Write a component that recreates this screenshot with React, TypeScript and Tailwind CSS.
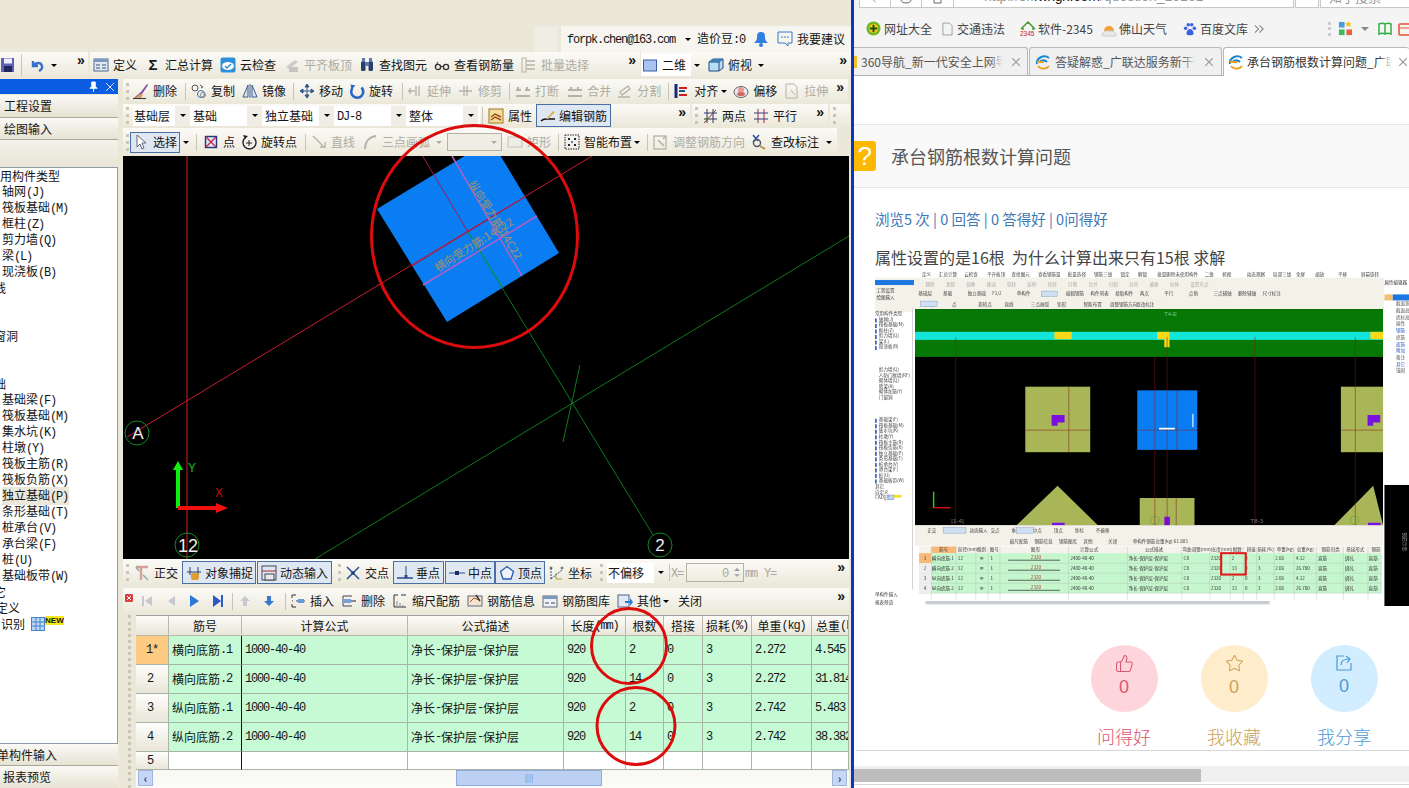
import React from "react";
import { ThumbsUp, Star } from "lucide-react";

const T = ({ children }: { children: string }) => (
  <>
    {children.split(/([\x21-\x7e]+)/).map((p, i) =>
      /^[\x21-\x7e]+$/.test(p) ? (
        <span key={i} className="font-['Liberation_Mono',monospace] text-[12px] tracking-[-1.2px]">{p}</span>
      ) : (
        <span key={i}>{p}</span>
      )
    )}
  </>
);

const S = ({ children, cls = "w-4 h-4" }: { children: React.ReactNode; cls?: string }) => (
  <svg viewBox="0 0 16 16" className={`${cls} shrink-0`} fill="none">{children}</svg>
);

const g = "#b5b3a8";
const ic: Record<string, React.ReactNode> = {
  save: <S><rect x="1" y="1" width="14" height="14" fill="#5a62b8" /><rect x="4" y="1.5" width="8" height="5" fill="#eef" /><rect x="4" y="9" width="8" height="6" fill="#23265e" /></S>,
  undo: <S><path d="M4 4v5h5M4.5 8.5C7 5 12 5 13 9c.5 2-1 4-3 5" stroke="#3a70c8" strokeWidth="2.4" /></S>,
  def: <S><rect x="1" y="2" width="14" height="12" fill="#dfe8f5" stroke="#50688c" /><rect x="1" y="2" width="14" height="3" fill="#7f98bd" /><path d="M3 8h4M3 11h4M9 8h4M9 11h4" stroke="#36507c" /></S>,
  sigma: <span className="w-4 h-4 shrink-0 flex items-center justify-center font-['Liberation_Sans'] font-bold text-[15px] leading-4 text-[#1a1a1a]">Σ</span>,
  cloud: <S><rect x="0.5" y="0.5" width="15" height="15" rx="2" fill="#2f8fd8" /><ellipse cx="8" cy="9" rx="6" ry="4" fill="#fff" /><path d="M5 9l2 2 4-4" stroke="#2f8fd8" strokeWidth="1.5" /></S>,
  flat: <S><path d="M2 10l9-7 3 2-9 7z" fill="#ccc" /><rect x="5" y="10" width="9" height="5" fill="#c4c4c0" /></S>,
  find: <S><rect x="2" y="4" width="4.5" height="10" rx="1.5" fill="#28406e" /><rect x="9.5" y="4" width="4.5" height="10" rx="1.5" fill="#28406e" /><rect x="6" y="5" width="4" height="4" fill="#5a78aa" /><rect x="3" y="1" width="3" height="4" fill="#5a78aa" /><rect x="10" y="1" width="3" height="4" fill="#5a78aa" /></S>,
  glass: <S><circle cx="4" cy="10" r="2.6" stroke="#333" strokeWidth="1.4" /><circle cx="12" cy="10" r="2.6" stroke="#333" strokeWidth="1.4" /><path d="M6.5 9.5h3M2 8l2-3" stroke="#333" /></S>,
  batch: <S><rect x="1" y="1" width="4" height="14" stroke={g} /><path d="M5 4h9M5 8h9M5 12h9" stroke={g} strokeWidth="1.5" /></S>,
  d2: <S><rect x="1.5" y="3" width="13" height="11" fill="#a9c2ee" stroke="#3c5ea6" /></S>,
  d3: <S><path d="M1 5l4-3h10v9l-4 3H1z" fill="#b8dcf4" stroke="#1f4a80" /><path d="M1 5h10v9M11 5l4-3" stroke="#1f4a80" /><path d="M1 5l4-3h10l-4 3z" fill="#3f7fb8" /></S>,
  brush: <S><path d="M1 15c3-3 5-4 7-6l6-8 1 1-6 9c-2 2-5 4-8 4z" fill="#7a4aa0" /><path d="M2 15l5-4 3 1-2 3z" fill="#e0a060" /><path d="M0 15.5h13" stroke="#333" /></S>,
  copy: <S><circle cx="4" cy="5" r="3" stroke="#555" /><circle cx="10" cy="11" r="3.5" stroke="#3a70a8" /><circle cx="12" cy="12" r="2.5" stroke="#888" /><path d="M9 2l3 2-2 1" stroke="#555" /></S>,
  mirror: <S><path d="M1 14L6 2v12zM15 14L10 2v12z" fill="#dbe6f4" stroke="#3a5a8c" /><path d="M8 1v14" stroke="#3a5a8c" /></S>,
  move: <S><path d="M8 1v14M1 8h14M8 1L6 4h4zM8 15l-2-3h4zM1 8l3-2v4zM15 8l-3-2v4z" stroke="#2f5a8c" fill="#2f5a8c" /></S>,
  rotate: <S><path d="M3.5 5A6 6 0 1 0 12.5 4.5" stroke="#2a66c8" strokeWidth="2.6" /><path d="M1.5 1.5l5 1-4 4z" fill="#2a66c8" /></S>,
  ext: <S><path d="M1 8h7M3 5v6M9 3v10M12 3v10" stroke={g} strokeWidth="1.3" /></S>,
  trim: <S><path d="M1 8h13M6 3v10M9 3v10" stroke={g} strokeWidth="1.3" /></S>,
  brk: <S><path d="M1 7h5M10 7h5M1 13h14M3 4v3M12 4v3" stroke={g} strokeWidth="2" /></S>,
  merge: <S><path d="M1 7h14M1 13h14M4 4v3M11 4v3" stroke={g} strokeWidth="2" /></S>,
  split: <S><path d="M1 14h12M3 9l8-6 2 3-8 6z" stroke={g} strokeWidth="1.3" /></S>,
  align: <S><path d="M2 1v14" stroke="#1a2a7a" strokeWidth="3" /><path d="M5 5h8M5 12h8" stroke="#c82020" strokeWidth="2" /><path d="M5 8h6" stroke="#1a5a9a" strokeWidth="2" /></S>,
  offset: <S><ellipse cx="8" cy="9" rx="7" ry="5.5" fill="#e8e8f4" stroke="#666" /><circle cx="8" cy="7" r="3" fill="#e89a90" /><ellipse cx="8" cy="11" rx="4" ry="2" fill="#d06a60" /></S>,
  stretch: <S><path d="M2 1h8l3 3v11H2z" stroke={g} /><path d="M7 7l4 5" stroke={g} /></S>,
  prop: <S><rect x="1" y="1" width="14" height="14" fill="#f2dfa0" stroke="#a07820" /><path d="M3 9l4-3 6 3M3 12l4-3 6 3" stroke="#a04a10" strokeWidth="1.4" /></S>,
  edit: <S><path d="M1 13c3-3 4-2 7-2h7" stroke="#111" strokeWidth="1.5" /><path d="M6 11l7-8 2 1-7 7z" fill="#d8b060" /></S>,
  two: <S><path d="M2 5h13M2 11h13M5 1v14M11 1v14" stroke="#2a3a6a" /><path d="M2 15L14 2" stroke="#8a3a2a" /><circle cx="5" cy="11" r="1.5" fill="#5a7a20" /></S>,
  para: <S><path d="M1 5h14M1 11h14" stroke="#2a3a8a" /><path d="M5 1v14M11 1v14" stroke="#a02a4a" /></S>,
  cursor: <S><path d="M4 1v12l3-3 2 5 2-1-2-5h4z" fill="#fff" stroke="#667" /></S>,
  point: <S><rect x="2.5" y="2.5" width="11" height="11" fill="#dde4f8" stroke="#25357a" strokeWidth="1.4" /><path d="M3 3l10 10M13 3L3 13" stroke="#c02a4a" strokeWidth="1.4" /></S>,
  rotp: <S><path d="M5 3a6.5 6.5 0 1 0 7 0" stroke="#223" strokeWidth="1.4" /><path d="M2 1l5 1-3 3z" fill="#223" /><path d="M8 6v6M5 9h6" stroke="#223" /></S>,
  linei: <S><path d="M2 2l11 11M9 13h5V8" stroke={g} strokeWidth="1.3" /></S>,
  arc: <S><path d="M3 15C3 8 7 3 14 2" stroke={g} strokeWidth="2" /></S>,
  rect: <S><rect x="1" y="3" width="14" height="10" fill="#eeede8" stroke="#c4c2b8" /></S>,
  smart: <S><rect x="1" y="1" width="14" height="14" stroke="#223" strokeDasharray="1.5 1" /><path d="M4 4h2v2H4zM10 4h2v2h-2zM4 10h2v2H4zM10 10h2v2h-2z" fill="#223" /><circle cx="8" cy="8" r="1" fill="#2a66c8" /></S>,
  adj: <S><rect x="1" y="2" width="12" height="13" stroke={g} strokeWidth="1.3" /><path d="M5 6l6 6M13 2l-3 3" stroke={g} strokeWidth="1.5" /></S>,
  mark: <S><path d="M2 1l5 6M8 1L2 8" stroke="#22509a" strokeWidth="1.4" /><circle cx="6" cy="9" r="3.5" stroke="#556" strokeWidth="1.4" /><path d="M9 12l5 3" stroke="#b89040" strokeWidth="2" /></S>,
  ortho: <S><path d="M2 2h12M7 2v13" stroke="#d8a098" strokeWidth="2.4" /><path d="M2 2l3 4M9 10l5 5" stroke="#8aa" strokeWidth="1.4" /></S>,
  snap: <S><path d="M1 7h14M4 2v8M12 2v8" stroke="#2a3a6a" /><rect x="5" y="8" width="8" height="7" rx="2" fill="#d8a030" /></S>,
  dyn: <S><rect x="1" y="1" width="14" height="14" stroke="#445" /><path d="M1 6h14" stroke="#a02a2a" /><rect x="4" y="9" width="9" height="6" fill="#e8e8f0" stroke="#445" /></S>,
  cross: <S><path d="M2 2l12 12M14 2L2 14" stroke="#2a5a98" strokeWidth="1.6" /><circle cx="8" cy="8" r="1.8" fill="#1a3a78" /></S>,
  perp: <S><path d="M0 13h16" stroke="#2a4a8a" strokeWidth="1.5" /><path d="M9 1v12" stroke="#2a4a8a" /><rect x="7.5" y="10" width="3" height="3" fill="#2a4a8a" /></S>,
  mid: <S><path d="M0 8h16" stroke="#2a4a8a" /><rect x="6" y="6" width="4" height="4" fill="#1a2a6a" /></S>,
  vert: <S><path d="M8 1.5l6.5 5-2.5 7.5H4L1.500 6.500z" fill="#eef3fb" stroke="#2a5aa8" strokeWidth="1.3" /></S>,
  coord: <S><path d="M3 14V3M3 14l11-9" stroke="#2a4a8a" strokeDasharray="2 1" /><circle cx="3" cy="3" r="1" stroke="#555" /><circle cx="14" cy="3" r="1" stroke="#555" /><path d="M8 8v6h6" stroke="#a0a030" /></S>,
  ins: <S><path d="M6 2H2v3M6 14H2v-3M2 8h1" stroke="#333" /><path d="M6 8h9" stroke="#444" /><rect x="8" y="6" width="6" height="4" fill="#6a9ad8" /></S>,
  del: <S><path d="M2 3h9M2 13h9M2 3v10" stroke="#446" /><rect x="2" y="6" width="8" height="4" fill="#7aa0d8" /><path d="M10 8h5" stroke="#222" /></S>,
  scale: <S><path d="M2 14h12M2 14V2h4M9 2h5" stroke="#333" /><path d="M5 14V8M8 14v-4M11 14v-2" stroke="#889" /></S>,
  info: <S><rect x="1" y="3" width="14" height="10" fill="#f4e4d0" stroke="#667" /><path d="M3 9l4-4 5 2" stroke="#a05020" /><path d="M9 2l4 6" stroke="#333" strokeWidth="1.4" /></S>,
  lib: <S><rect x="1" y="3" width="14" height="11" fill="#eef2f8" stroke="#667" /><rect x="1" y="3" width="14" height="3" fill="#7a98c0" /><path d="M3 10h4M9 10h4" stroke="#445" /></S>,
  other: <S><rect x="1" y="2" width="11" height="12" fill="#e0e8f4" stroke="#568" /><path d="M8 8h5V5l3 4-3 4v-3H8z" fill="#2a78d8" /></S>,
};

const Tool = ({ n, i, ml = "", dim = false }: { n: string; i: string; ml?: string; dim?: boolean }) => (
  <div className={`flex items-center gap-[4px] shrink-0 whitespace-nowrap ${ml} ${dim ? "text-[#aeaca2]" : ""}`}>
    {ic[i]}
    <span><T>{n}</T></span>
  </div>
);

const Box = ({ n, i, cls }: { n: string; i: string; cls: string }) => (
  <div className={`flex items-center gap-[3px] h-[23px] shrink-0 whitespace-nowrap border border-[#4a6fa5] bg-[#dfe8f2] pl-[3px] ${cls}`}>
    {ic[i]}
    <span>{n}</span>
  </div>
);

const Sep = ({ ml }: { ml: string }) => <div className={`w-px h-[17px] bg-[#c8c5b6] shrink-0 ${ml}`} />;
const Grip = ({ ml }: { ml: string }) => <div className={`h-[17px] w-[3px] border-l-[3px] border-dotted border-[#c9c6b8] shrink-0 ${ml}`} />;
const Caret = ({ ml, dim = false }: { ml: string; dim?: boolean }) => (
  <div className={`w-0 h-0 border-x-[3px] border-t-[3px] border-x-transparent shrink-0 ${dim ? "border-t-[#aaa]" : "border-t-black"} ${ml}`} />
);
const More = ({ cls = "ml-auto mr-[4px]" }: { cls?: string }) => (
  <div className={`self-start mt-[1px] text-[14px] leading-[14px] font-bold font-['Liberation_Sans'] ${cls}`}>»</div>
);
const bar = "flex items-center bg-linear-to-b from-[#fbfaf6] to-[#ebe8da]";

const Combo = ({ t, w }: { t: string; w: string }) => (
  <div className={`flex items-center h-[20px] bg-white shrink-0 ${w}`}>
    <span className="flex-1 whitespace-nowrap pl-[1px]"><T>{t}</T></span>
    <div className="w-[15px] h-[20px] bg-[#f0eee4] flex items-center justify-center mr-[2px]"><Caret ml="" /></div>
  </div>
);

const NavI = ({ ml, c, d }: { ml: string; c: string; d: string }) => (
  <svg viewBox="0 0 14 14" className={`w-[14px] h-[14px] shrink-0 ${ml}`}><path d={d} fill={c} /></svg>
);

const tree: [string, string, boolean?][] = [
  ["常用构件类型", "-ml-[12px]"], ["轴网(J)", "ml-[2px]"], ["筏板基础(M)", "ml-[2px]"], ["框柱(Z)", "ml-[2px]"], ["剪力墙(Q)", "ml-[2px]"], ["梁(L)", "ml-[2px]"], ["现浇板(B)", "ml-[2px]"], ["线", "-ml-[6px]"], ["", ""], ["", ""], ["门窗洞", "-ml-[18px]"], ["", ""], ["", ""], ["基础", "-ml-[18px]"], ["基础梁(F)", "ml-[2px]"], ["筏板基础(M)", "ml-[2px]"], ["集水坑(K)", "ml-[2px]"], ["柱墩(Y)", "ml-[2px]"], ["筏板主筋(R)", "ml-[2px]"], ["筏板负筋(X)", "ml-[2px]"], ["独立基础(P)", "ml-[2px]", true], ["条形基础(T)", "ml-[2px]"], ["桩承台(V)", "ml-[2px]"], ["承台梁(F)", "ml-[2px]"], ["桩(U)", "ml-[2px]"], ["基础板带(W)", "ml-[2px]"], ["其它", "-ml-[18px]"], ["自定义", "-ml-[16px]"],
];

const cols = "grid grid-cols-[33px_73px_166px_156px_62px_38px_39px_49px_60px_37px]";
const heads = ["", "筋号", "计算公式", "公式描述", "长度(mm)", "根数", "搭接", "损耗(%)", "单重(kg)", "总重(kg)"];
const rows = [
  ["1*", "横向底筋.1", "1000-40-40", "净长-保护层-保护层", "920", "2", "0", "3", "2.272", "4.545"],
  ["2", "横向底筋.2", "1000-40-40", "净长-保护层-保护层", "920", "14", "0", "3", "2.272", "31.814"],
  ["3", "纵向底筋.1", "1000-40-40", "净长-保护层-保护层", "920", "2", "0", "3", "2.742", "5.483"],
  ["4", "纵向底筋.2", "1000-40-40", "净长-保护层-保护层", "920", "14", "0", "3", "2.742", "38.382"],
  ["5", "", "", "", "", "", "", "", "", ""],
];

const Canvas = () => (
  <svg viewBox="123 156 726 403" className="w-[726px] h-[403px] block bg-black shrink-0">
    <polygon points="377,209 491,140 559,253 447,322" fill="#0b7df2" />
    <line x1="315" y1="559" x2="849" y2="236" stroke="#0e7a1e" />
    <line x1="468" y1="232" x2="653" y2="535" stroke="#0e7a1e" />
    <line x1="468" y1="232" x2="503" y2="288" stroke="#0c8c78" strokeWidth="1.5" />
    <line x1="580" y1="365" x2="563" y2="442" stroke="#0e7a1e" />
    <line x1="187" y1="155" x2="187" y2="559" stroke="#d02020" />
    <line x1="422" y1="155" x2="468" y2="232" stroke="#a01a50" />
    <line x1="127" y1="437" x2="597" y2="153" stroke="#c81c30" />
    <line x1="412" y1="266" x2="525" y2="197" stroke="#9a1a50" />
    <line x1="452" y1="156" x2="522" y2="276" stroke="#b060c8" strokeWidth="1.5" />
    <line x1="423" y1="285" x2="537" y2="216" stroke="#b060c8" strokeWidth="1.5" />
    <text x="476" y="248" transform="rotate(-32 476 248)" textAnchor="middle" fontSize="11" fontWeight="500" fill="#8d8f80" fontFamily="Noto Sans CJK SC">横向受力筋:14C22</text>
    <text x="492" y="222" transform="rotate(58 492 222)" textAnchor="middle" fontSize="11" fontWeight="500" fill="#8d8f80" fontFamily="Noto Sans CJK SC">纵向受力筋:14C22</text>
    <circle cx="137" cy="433" r="12" stroke="#128a28" fill="none" />
    <circle cx="187" cy="545" r="12" stroke="#128a28" fill="none" />
    <circle cx="660" cy="545" r="12" stroke="#128a28" fill="none" />
    <text x="138" y="439" textAnchor="middle" fontSize="17" fill="#eee" fontFamily="Liberation Sans">A</text>
    <text x="188" y="552" textAnchor="middle" fontSize="18" fill="#eee" fontFamily="Liberation Sans">12</text>
    <text x="660" y="551" textAnchor="middle" fontSize="17" fill="#eee" fontFamily="Liberation Sans">2</text>
    <path d="M176 508V470h-3l5-9 5 9h-3v38z" fill="#10f010" />
    <path d="M178 506h38v-3l12 5-12 5v-3h-38z" fill="#f01010" />
    <text x="188" y="472" fontSize="12" fontWeight="300" fill="#10c020" fontFamily="Liberation Sans">Y</text>
    <text x="215" y="497" fontSize="12" fontWeight="300" fill="#c01010" fontFamily="Liberation Sans">X</text>
  </svg>
);

const tiny = { fontFamily: "Noto Sans CJK SC", fontSize: 13 };
const Thumb = () => {
  const tb1 = ["定义", "汇总计算", "云检查", "平齐板顶", "查找图元", "查看钢筋量", "批量选择", "钢筋三维", "锁定", "解锁", "批量删除未使用构件", "二维", "俯视", "动态观察", "局部三维", "全屏", "缩放", "平移", "屏幕旋转"];
  const xs1 = [180, 228, 300, 365, 435, 510, 595, 670, 745, 795, 850, 985, 1035, 1105, 1180, 1245, 1300, 1365, 1430];
  const tr = [877, 907, 937, 967];
  const left = ["轴网(J)", "筏板基础(M)", "框柱(Z)", "剪力墙(Q)", "梁(L)", "现浇板(B)"];
  const left2 = ["剪力墙(Q)", "人防门框墙(RF)", "砌体墙(Q)", "暗梁(A)", "砌体加筋(Y)", "门窗洞"];
  const left3 = ["基础梁(F)", "筏板基础(M)", "集水坑(K)", "柱墩(Y)", "筏板主筋(R)", "筏板负筋(X)", "独立基础(P)", "条形基础(T)", "桩承台(V)", "承台梁(F)", "桩(U)", "基础板带(W)"];
  return (
    <svg viewBox="46 18 1521 1005" preserveAspectRatio="none" className="w-[534px] h-[336px] block blur-[0.4px]">
      <rect x="46" y="38" width="1450" height="94" fill="#f3f1e8" />
      <rect x="46" y="60" width="107" height="80" fill="#f3f1e8" />
      <rect x="160" y="778" width="1333" height="62" fill="#f3f1e8" />
      <g fill="#444" {...tiny}>
        {tb1.map((t, i) => <text key={i} x={xs1[i]} y="33">{t}</text>)}
        {["删除", "复制", "镜像", "移动", "旋转", "延伸", "修剪", "打断", "合并", "分割", "对齐", "偏移", "拉伸", "设置夹点"].map((t, i) => <text key={i} x={190 + i * 58} y="62" fill="#aaa">{t}</text>)}
        {["基础层", "基础", "独立基础", "F1/2", "单构件", "属性", "编辑钢筋", "构件列表", "拾取构件", "两点", "平行", "点角", "三点辅轴", "删除辅轴", "尺寸标注"].map((t, i) => <text key={i} x={170 + i * 70} y="91">{t}</text>)}
        {["选择", "点", "旋转点", "直线", "三点画弧", "矩形", "智能布置", "调整钢筋方向", "查改标注"].map((t, i) => <text key={i} x={190 + i * 75} y="122">{t}</text>)}
      </g>
      <rect x="520" y="78" width="45" height="17" fill="#cfe0f2" stroke="#6a8ab5" />
      <rect x="175" y="108" width="48" height="17" fill="#cfe0f2" stroke="#6a8ab5" />
      <rect x="46" y="45" width="111" height="15" fill="#1a78e0" />
      <g fill="#444" {...tiny}><text x="50" y="80">工程设置</text><text x="50" y="102">绘图输入</text><text x="46" y="150">常用构件类型</text>
        {left.map((t, i) => <text key={t} x="57" y={167 + i * 16.500}>{t}</text>)}
        {left2.map((t, i) => <text key={t} x="57" y={318 + i * 16.500}>{t}</text>)}
        {left3.map((t, i) => <text key={i} x="57" y={468 + i * 16.500}>{t}</text>)}
        <text x="46" y="668">其它</text><text x="46" y="685">自定义</text><text x="46" y="700">CAD识别</text>
        <text x="46" y="990">单构件输入</text><text x="46" y="1013">报表预览</text>
      </g>
      {[...Array(6)].map((_, i) => <rect key={i} x="46" y={160 + i * 16.500} width="5" height="12" fill="#3a68c0" />)}
      {[...Array(12)].map((_, i) => <rect key={i} x="46" y={460 + i * 16.500} width="5" height="12" fill="#3a68c0" />)}
      <rect x="152" y="130" width="1.500" height="840" fill="#aaa" />
      <rect x="85" y="688" width="15" height="14" fill="#bcd4f4" stroke="#4a7ac8" />
      <rect x="100" y="688" width="22" height="8" fill="#f2e020" />
      <rect x="160" y="132" width="1333" height="646" fill="#000" />
      <rect x="160" y="132" width="1333" height="143" fill="#067806" />
      <rect x="160" y="200" width="1333" height="24" fill="#12e6da" />
      <rect x="557" y="200" width="49" height="22" fill="#f8d818" />
      <rect x="850" y="200" width="35" height="22" fill="#f8d818" />
      <rect x="870" y="222" width="15" height="24" fill="#f8d818" />
      <rect x="1457" y="200" width="36" height="22" fill="#f8d818" />
      <text x="888" y="152" fill="#7ac88a" fontSize="17" textAnchor="middle" fontFamily="Liberation Sans">T4-E</text>
      <rect x="474" y="364" width="185" height="196" fill="#a9b657" />
      <rect x="1373" y="364" width="120" height="196" fill="#a9b657" />
      <rect x="793" y="375" width="171" height="178" fill="#0b7df2" />
      <path d="M549 449h37v22h-20v10h-17z" fill="#7a10e0" />
      <path d="M1449 449h36v22h-20v10h-16z" fill="#7a10e0" />
      <path d="M566 660L450 778h230zM1465 660L1355 778h138z" fill="#a9b657" />
      <rect x="800" y="697" width="156" height="81" fill="#a9b657" />
      <rect x="870" y="753" width="16" height="25" fill="#7a10e0" />
      <rect x="550" y="771" width="36" height="7" fill="#7a10e0" />
      <rect x="1450" y="771" width="36" height="7" fill="#7a10e0" />
      <g stroke="#8a1a1a" strokeWidth="1.500">
        <path d="M276 215v563M843 275v503M878 215v563M1128 215v563M1414 215v563M598 364v196M906 375v178M904 697v81" />
        <path d="M474 494h185M793 494h171M1373 494h120" />
      </g>
      <rect x="950" y="445" width="3" height="40" fill="#fff" />
      <rect x="855" y="487" width="45" height="5" fill="#fff" />
      <path d="M213 678v48" stroke="#10e010" strokeWidth="4" fill="none" />
      <path d="M213 726h48" stroke="#e01010" strokeWidth="4" />
      <text x="263" y="772" fill="#777" fontSize="18" fontFamily="Liberation Sans">[1-4]</text>
      <text x="1115" y="772" fill="#777" fontSize="18" fontFamily="Liberation Sans">T8-3</text>
      <circle cx="843" cy="764" r="12" stroke="#1a8a2a" fill="none" />
      <circle cx="1412" cy="764" r="12" stroke="#1a8a2a" fill="none" />
      <rect x="1497" y="658" width="105" height="362" fill="#000" />
      <text x="1550" y="800" fill="#999" fontSize="14" transform="rotate(90 1550 800)" fontFamily="Noto Sans CJK SC">钢筋示意</text>
      <text x="1497" y="57" fill="#333" {...tiny}>属性编辑器</text>
      <rect x="1520" y="88" width="82" height="18" fill="#1a78e0" />
      <rect x="1497" y="88" width="23" height="18" fill="#f4c070" />
      {[117, 137, 157, 177, 197, 217, 237, 257, 277, 297, 317].map((y, i) => (
        <text key={y} x="1530" y={y + 4} fill={i === 4 || i === 6 || i === 7 || i === 9 ? "#2a5ac0" : "#555"} {...tiny}>{["截面宽", "截面高", "底标高", "属性", "钢筋", "底筋", "面筋", "附加", "备注", "其它", "锚固"][i]}</text>
      ))}
      <g fill="#444" {...tiny}>
        {["正交", "对象捕捉", "动态输入", "交点", "垂点", "中点", "顶点", "坐标", "不偏移"].map((t, i) => <text key={i} x={195 + i * 60} y="798">{t}</text>)}
        {["缩尺配筋", "钢筋信息", "钢筋图库", "其他", "关闭", "单构件钢筋总重(kg):61.803"].map((t, i) => <text key={i} x={430 + i * 70} y="831">{t}</text>)}
      </g>
      <rect x="240" y="785" width="65" height="17" fill="#cfe0f2" stroke="#6a8ab5" />
      <rect x="448" y="785" width="50" height="17" fill="#cfe0f2" stroke="#6a8ab5" />
      <rect x="172" y="842" width="1318" height="20" fill="#f4f2ea" />
      <rect x="207" y="842" width="70" height="20" fill="#f8b878" />
      {["筋号", "直径(mm)", "级别", "图号", "图形", "计算公式", "公式描述", "弯曲调整(mm)", "长度(mm)", "根数", "搭接", "损耗(%)", "单重(kg)", "总重(kg)", "钢筋归类", "搭接形式", "钢筋"].map((t, i) => (
        <text key={i} x={[228, 282, 337, 373, 490, 630, 815, 922, 1005, 1065, 1105, 1135, 1190, 1247, 1318, 1388, 1460][i]} y="857" fill="#444" {...tiny}>{t}</text>
      ))}
      <rect x="172" y="862" width="1318" height="120" fill="#c6f6ce" />
      <rect x="172" y="982" width="1318" height="20" fill="#fff" />
      <path d="M172 892h1318M172 922h1318M172 952h1318M172 982h1318M206 842v160M277 842v160M333 842v160M368 842v160M402 842v160M597 842v160M765 842v160M920 842v160M1000 842v160M1058 842v160M1095 842v160M1133 842v160M1183 842v160M1240 842v160M1303 842v160M1380 842v160M1450 842v160" stroke="#a8b8a8" />
      {tr.map((y, i) => (
        <g key={y} fill="#333" {...tiny}>
          <rect x="172" y={y - 15} width="34" height="30" fill={i === 0 ? "#f8b878" : "#eee"} />
          <text x="185" y={y + 4}>{i + 1}</text>
          <text x="208" y={y + 4}>{i < 2 ? "横向底筋" : "纵向底筋"}.{i % 2 + 1}</text>
          <text x="282" y={y + 4}>12</text><text x="345" y={y + 4}>Φ</text><text x="375" y={y + 4}>1</text>
          <path d={`M425 ${y + 6}h148`} stroke="#222" strokeWidth="2" />
          <text x="490" y={y + 2} fill="#b03020">2320</text>
          <text x="603" y={y + 4}>2400-40-40</text>
          <text x="768" y={y + 4}>净长-保护层-保护层</text>
          <text x="925" y={y + 4}>C8</text><text x="1003" y={y + 4}>2320</text>
          <text x="1062" y={y + 4}>{i % 2 ? 13 : 2}</text><text x="1100" y={y + 4}>0</text><text x="1137" y={y + 4}>3</text>
          <text x="1186" y={y + 4}>2.06</text><text x="1245" y={y + 4}>{i % 2 ? "26.780" : "4.12"}</text>
          <text x="1308" y={y + 4}>直筋</text><text x="1385" y={y + 4}>绑扎</text><text x="1452" y={y + 4}>直筋</text>
        </g>
      ))}
      <rect x="1032" y="862" width="70" height="64" fill="none" stroke="#e01818" strokeWidth="6" />
      <rect x="190" y="1005" width="980" height="10" fill="#c8ccd4" />
    </svg>
  );
};

const TabIcon = () => (
  <svg viewBox="0 0 16 16" className="w-[16px] h-[16px] shrink-0" fill="none">
    <path d="M2 10C1 4 9 0 14 4M4 8c3-2 6-2 8 0" stroke="#1f88cc" strokeWidth="2" />
    <path d="M3 12c3 4 9 3 11 0M2 8h7" stroke="#f0a020" strokeWidth="2" />
  </svg>
);
const TabX = () => (
  <svg viewBox="0 0 8 8" className="w-[8px] h-[8px] shrink-0"><path d="M0 0l8 8M8 0L0 8" stroke="#999" strokeWidth="1.200" /></svg>
);
const Fade = ({ to }: { to: string }) => <div className={`absolute right-0 top-0 bottom-0 w-[14px] bg-linear-to-r from-transparent ${to}`} />;

export default function App() {
  return (
    <div className="w-[1409px] h-[788px] flex overflow-hidden bg-white text-[12px] leading-[16px] text-[#151515] font-['Noto_Sans_CJK_SC','Liberation_Sans',sans-serif]">
      <div className="relative w-[851px] h-[788px] shrink-0 overflow-hidden bg-[#ebe8da]">
        <div className="h-[26px]" />
        <div className="h-[26px] flex">
          <div className="w-[24px] ml-[534px] bg-[#f0eee4]" />
          <div className="w-[290px] ml-[3px] flex items-center bg-[#f6f5ef] pl-[6px] whitespace-nowrap">
            <span><T>forpk.chen@163.com</T></span>
            <Caret ml="ml-[10px]" />
            <span className="ml-[6px]"><T>造价豆:0</T></span>
            <svg viewBox="0 0 16 16" className="w-[16px] h-[16px] ml-[8px] shrink-0"><path d="M8 1c3 0 4 2 4 5 0 3 1 4 3 6H1c2-2 3-3 3-6 0-3 1-5 4-5z" fill="#2f7fe0" /><circle cx="8" cy="14" r="2" fill="#2f7fe0" /></svg>
            <svg viewBox="0 0 16 16" className="w-[16px] h-[16px] ml-[8px] shrink-0" fill="none"><path d="M1 1h14v11h-4v3l-3-3H1z" stroke="#3a78c8" /><path d="M4 6h8" stroke="#3a78c8" strokeDasharray="2 1" /></svg>
            <span className="ml-[4px]">我要建议</span>
          </div>
        </div>
        <div className="h-[26px] flex">
          <div className={`${bar} w-[88px] shrink-0`}>
            <div className="w-[14px] overflow-hidden shrink-0">{ic.save}</div>
            <div className="w-px h-[22px] bg-[#c8c5b6] ml-[7px]" />
            <div className="ml-[7px]">{ic.undo}</div>
            <Caret ml="ml-[6px]" />
            <More cls="ml-[20px]" />
          </div>
          <div className={`${bar} w-[550px] shrink-0 ml-[2px]`}>
            <Tool n="定义" i="def" ml="ml-[3px]" />
            <Tool n="汇总计算" i="sigma" ml="ml-[8px]" />
            <Tool n="云检查" i="cloud" ml="ml-[7px]" />
            <Tool n="平齐板顶" i="flat" ml="ml-[8px]" dim />
            <Tool n="查找图元" i="find" ml="ml-[7px]" />
            <Tool n="查看钢筋量" i="glass" ml="ml-[7px]" />
            <Tool n="批量选择" i="batch" ml="ml-[7px]" dim />
            <More />
          </div>
          <div className={`${bar} flex-1 ml-[1px]`}>
            <div className="flex items-center gap-[4px] bg-white w-[50px] h-[22px] pl-[1px] shrink-0">{ic.d2}<span>二维</span></div>
            <Caret ml="ml-[3px]" />
            <Tool n="俯视" i="d3" ml="ml-[8px]" />
            <Caret ml="ml-[6px]" />
            <More />
          </div>
        </div>
        <div className="flex h-[710px]">
          <div className="w-[118px] shrink-0 flex flex-col overflow-hidden">
            <div className="h-[15px] mt-[1px] bg-[#0a5ce0] flex items-center justify-end pr-[4px] gap-[8px] text-white shrink-0">
              <svg viewBox="0 0 10 12" className="w-[9px] h-[11px]"><path d="M3 1h4v5l2 2H1l2-2zM5 8v4" fill="#fff" stroke="#fff" /></svg>
              <svg viewBox="0 0 8 8" className="w-[8px] h-[8px]"><path d="M0 0l8 8M8 0L0 8" stroke="#dde" /></svg>
            </div>
            <div className="h-[23px] mt-[1px] flex items-center pl-[4px] bg-linear-to-b from-[#faf9f4] to-[#e6e3d4] border-b border-[#a8a69a] shrink-0">工程设置</div>
            <div className="h-[22px] flex items-center pl-[4px] bg-linear-to-b from-[#faf9f4] to-[#e6e3d4] border-b border-[#a8a69a] shrink-0">绘图输入</div>
            <div className="h-[27px] bg-linear-to-b from-[#f4f2ea] to-[#e8e5d6] shrink-0" />
            <div className="h-[577px] bg-white border-y border-r border-[#8f9ba8] overflow-hidden shrink-0">
              {tree.map(([t, m, hl], i) => (
                <div key={i} className="h-[16px] flex items-center whitespace-nowrap">
                  <span className={`${m} ${hl ? "bg-[#eae8dc] pr-[1px]" : ""}`}><T>{t}</T></span>
                </div>
              ))}
              <div className="h-[16px] flex items-center whitespace-nowrap pl-[1px]">
                <span>识别</span>
                <svg viewBox="0 0 14 14" className="w-[14px] h-[14px] ml-[6px]"><rect x="0.500" y="0.500" width="13" height="13" fill="#bcd8f8" stroke="#4a80c8" /><path d="M5 1v12M9 1v12M1 5h12M1 9h12" stroke="#4a80c8" /></svg>
                <span className="font-['Liberation_Sans'] font-bold text-[8px] leading-[9px] bg-[#f8e820] self-start">NEW</span>
              </div>
            </div>
            <div className="h-[22px] flex items-center whitespace-nowrap -ml-[3px] bg-linear-to-b from-[#faf9f4] to-[#e6e3d4] border-b border-[#a8a69a] shrink-0">单构件输入</div>
            <div className="h-[22px] flex items-center whitespace-nowrap pl-[3px] bg-linear-to-b from-[#faf9f4] to-[#e6e3d4] shrink-0">报表预览</div>
          </div>
          <div className="w-[5px] shrink-0" />
          <div className="w-[728px] shrink-0 flex flex-col">
            <div className={`${bar} h-[24px] mt-[1px] shrink-0 w-[725px]`}>
              <Grip ml="ml-[3px]" />
              <Tool n="删除" i="brush" ml="ml-[4px]" />
              <Sep ml="ml-[8px]" />
              <Tool n="复制" i="copy" ml="ml-[5px]" />
              <Tool n="镜像" i="mirror" ml="ml-[7px]" />
              <Sep ml="ml-[7px]" />
              <Tool n="移动" i="move" ml="ml-[5px]" />
              <Tool n="旋转" i="rotate" ml="ml-[6px]" />
              <Sep ml="ml-[9px]" />
              <Tool n="延伸" i="ext" ml="ml-[4px]" dim />
              <Tool n="修剪" i="trim" ml="ml-[7px]" dim />
              <Sep ml="ml-[7px]" />
              <Tool n="打断" i="brk" ml="ml-[5px]" dim />
              <Tool n="合并" i="merge" ml="ml-[8px]" dim />
              <Tool n="分割" i="split" ml="ml-[6px]" dim />
              <Sep ml="ml-[7px]" />
              <Tool n="对齐" i="align" ml="ml-[5px]" />
              <Caret ml="ml-[3px]" />
              <Tool n="偏移" i="offset" ml="ml-[6px]" />
              <Tool n="拉伸" i="stretch" ml="ml-[7px]" dim />
              <More />
            </div>
            <div className="h-[23px] mt-[1px] flex shrink-0">
              <div className={`${bar} w-[567px] shrink-0`}>
                <Grip ml="ml-[3px]" />
                <div className="ml-[4px] flex items-center">
                  <Combo t="基础层" w="w-[59px]" />
                  <Combo t="基础" w="w-[72px]" />
                  <Combo t="独立基础" w="w-[72px]" />
                  <Combo t="DJ-8" w="w-[72px]" />
                  <Combo t="整体" w="w-[72px]" />
                </div>
                <Sep ml="ml-[2px]" />
                <Tool n="属性" i="prop" ml="ml-[5px]" />
                <Box n="编辑钢筋" i="edit" cls="ml-[4px] w-[75px]" />
                <More />
              </div>
              <div className={`${bar} w-[136px] shrink-0 ml-[2px]`}>
                <Grip ml="ml-[3px]" />
                <Tool n="两点" i="two" ml="ml-[4px]" />
                <Tool n="平行" i="para" ml="ml-[7px]" />
                <More />
              </div>
              <div className={`${bar} w-[20px] shrink-0 ml-[2px]`}><Grip ml="ml-[3px]" /></div>
            </div>
            <div className={`${bar} h-[28px] mt-[1px] shrink-0 w-[714px]`}>
              <Grip ml="ml-[3px]" />
              <div className="ml-[1px] w-[50px] h-[21px] flex items-center border border-[#4a6fa5] bg-[#dfe8f2] pl-[2px] shrink-0">
                {ic.cursor}<span className="ml-[4px]">选择</span>
              </div>
              <Caret ml="ml-[3px]" />
              <Sep ml="ml-[7px]" />
              <Tool n="点" i="point" ml="ml-[6px]" />
              <Tool n="旋转点" i="rotp" ml="ml-[6px]" />
              <Sep ml="ml-[8px]" />
              <Tool n="直线" i="linei" ml="ml-[5px]" dim />
              <Tool n="三点画弧" i="arc" ml="ml-[7px]" dim />
              <Caret ml="ml-[6px]" dim />
              <div className="ml-[5px] w-[55px] h-[18px] border border-[#b5b2a2] bg-[#f0eee4] flex items-center justify-end pr-[4px] shrink-0"><Caret ml="" dim /></div>
              <Tool n="矩形" i="rect" ml="ml-[5px]" dim />
              <Sep ml="ml-[7px]" />
              <Tool n="智能布置" i="smart" ml="ml-[5px]" />
              <Caret ml="ml-[2px]" />
              <Sep ml="ml-[7px]" />
              <Tool n="调整钢筋方向" i="adj" ml="ml-[5px]" dim />
              <Tool n="查改标注" i="mark" ml="ml-[6px]" />
              <Caret ml="ml-[7px]" />
            </div>
            <Canvas />
            <div className={`${bar} h-[27px] shrink-0 w-[726px]`}>
              <Grip ml="ml-[3px]" />
              <Tool n="正交" i="ortho" ml="ml-[5px]" />
              <Box n="对象捕捉" i="snap" cls="ml-[4px] w-[74px]" />
              <Box n="动态输入" i="dyn" cls="ml-px w-[75px]" />
              <Grip ml="ml-[6px]" />
              <Tool n="交点" i="cross" ml="ml-[4px]" />
              <Box n="垂点" i="perp" cls="ml-[4px] w-[51px]" />
              <Box n="中点" i="mid" cls="ml-px w-[50px]" />
              <Box n="顶点" i="vert" cls="w-[50px]" />
              <Tool n="坐标" i="coord" ml="ml-[3px]" />
              <Grip ml="ml-[8px]" />
              <div className="ml-[4px] w-[58px] h-[20px] flex items-center shrink-0">
                <span className="bg-white w-[47px] h-[20px] pl-[1px] flex items-center">不偏移</span>
                <Caret ml="ml-[4px]" />
              </div>
              <Sep ml="ml-[4px]" />
              <span className="ml-px text-[#aaa8a0]"><T>X=</T></span>
              <div className="ml-[3px] w-[58px] h-[19px] border border-[#b5b2a2] flex items-center justify-end pr-[3px] shrink-0 text-[#aaa8a0]">
                <span className="mr-[6px]"><T>0</T></span>
                <div className="flex flex-col gap-[3px]">
                  <div className="w-0 h-0 border-x-[3px] border-b-[3px] border-x-transparent border-b-[#999]" />
                  <Caret ml="" dim />
                </div>
              </div>
              <span className="ml-px text-[#aaa8a0]"><T>mm</T></span>
              <span className="ml-[7px] text-[#aaa8a0]"><T>Y=</T></span>
              <More />
            </div>
            <div className={`${bar} h-[26px] mt-[2px] shrink-0 w-[726px]`}>
              <svg viewBox="0 0 8 8" className="w-[8px] h-[8px] ml-[2px] mb-[6px] shrink-0"><rect width="8" height="8" rx="1" fill="#d84040" /><path d="M2 2l4 4M6 2L2 6" stroke="#fff" /></svg>
              <NavI ml="ml-[7px]" c="#c4c8d0" d="M2 2h2v10H2zM12 2v10L5 7z" />
              <NavI ml="ml-[10px]" c="#c4c8d0" d="M11 2v10L4 7z" />
              <NavI ml="ml-[9px]" c="#2a78d8" d="M3 1v12l9-6z" />
              <NavI ml="ml-[10px]" c="#2a5ac8" d="M2 1v12l8-6zM10 1h2v12h-2z" />
              <Sep ml="ml-[7px]" />
              <NavI ml="ml-[5px]" c="#c4c8d0" d="M7 2l5 5H9v5H5V7H2z" />
              <NavI ml="ml-[10px]" c="#3a78d0" d="M7 12L2 7h3V2h4v5h3z" />
              <Sep ml="ml-[9px]" />
              <Tool n="插入" i="ins" ml="ml-[4px]" />
              <Tool n="删除" i="del" ml="ml-[7px]" />
              <Tool n="缩尺配筋" i="scale" ml="ml-[7px]" />
              <Tool n="钢筋信息" i="info" ml="ml-[7px]" />
              <Tool n="钢筋图库" i="lib" ml="ml-[7px]" />
              <Tool n="其他" i="other" ml="ml-[7px]" />
              <Caret ml="ml-[2px]" />
              <span className="ml-[9px]">关闭</span>
              <More />
            </div>
            <div className="flex h-[173px] mt-px shrink-0">
              <div className="w-[8px] ml-[5px] border-l-[3px] border-dotted border-[#c9c6b8] shrink-0" />
              <div className="w-[713px] shrink-0 flex flex-col overflow-hidden border-t border-[#9aa0a0] bg-white">
                <div className={`${cols} h-[20px] shrink-0`}>
                  {heads.map((h, i) => (
                    <div key={i} className={`flex items-center whitespace-nowrap overflow-hidden bg-linear-to-b from-[#fdfcf9] to-[#e9e6d8] border-r border-b border-[#b8b8ac] ${i === 9 ? "pl-[4px]" : "justify-center"}`}><T>{h}</T></div>
                  ))}
                </div>
                {rows.map((r, ri) => (
                  <div key={ri} className={`${cols} ${ri === 4 ? "h-[18px]" : "h-[29px]"} shrink-0`}>
                    {r.map((c, ci) => (
                      <div
                        key={ci}
                        className={`flex items-center whitespace-nowrap overflow-hidden border-b border-r ${ci === 1 ? "border-r-[#111] border-b-[#a8b4a8]" : "border-[#a8b4a8]"} ${
                          ci === 0
                            ? ri === 0
                              ? "bg-[#fdcb82] pl-[10px]"
                              : "bg-linear-to-b from-[#fdfdfb] to-[#e9e6d8] pl-[11px]"
                            : ri === 4
                              ? "bg-white pl-[3px]"
                              : "bg-[#c5fad5] pl-[3px]"
                        }`}
                      >
                        <T>{c}</T>
                      </div>
                    ))}
                  </div>
                ))}
                <div className="flex-1 flex items-stretch bg-linear-to-b from-[#f8f7f2] to-[#fbfbf8] pl-[2px]">
                  <div className="w-[15px] h-[16px] bg-[#c6d6f4] border border-[#9fb6df] flex items-center justify-center text-[#223a7a] text-[11px] leading-none font-bold shrink-0">‹</div>
                  <div className="ml-[303px] w-[146px] h-[16px] bg-[#bcd0f4] border border-[#8faadf] flex items-center justify-center text-[#6f8ac0] text-[8px] leading-none shrink-0">||||</div>
                  <div className="ml-[230px] w-[15px] h-[16px] bg-[#c6d6f4] border border-[#9fb6df] flex items-center justify-center text-[#223a7a] text-[11px] leading-none font-bold shrink-0">›</div>
                </div>
              </div>
            </div>
          </div>
        </div>
        <svg viewBox="0 0 851 788" className="absolute inset-0 w-[851px] h-[788px] pointer-events-none" fill="none" stroke="#dc0c0c">
          <ellipse cx="474.500" cy="236.500" rx="103" ry="111" strokeWidth="3" />
          <ellipse cx="629" cy="646" rx="37.500" ry="37.500" strokeWidth="3" />
          <ellipse cx="636" cy="726" rx="39" ry="38.500" strokeWidth="3" />
        </svg>
      </div>

      <div className="w-[3px] bg-[#0a36c4] shrink-0" />

      <div className="w-[555px] shrink-0 flex flex-col overflow-hidden">
        <div className="h-[10px] bg-[#f3f3f3] overflow-hidden shrink-0 flex items-start">
          <div className="ml-[5px] h-[8px] w-[435px] bg-white border-b border-x border-[#c8c8c8] flex overflow-hidden shrink-0">
            <div className="w-[31px] border-r border-[#c8c8c8] shrink-0"><svg viewBox="0 0 31 8" className="w-[31px] h-[8px]" fill="none"><path d="M13 0l3 2" stroke="#aaa" /></svg></div>
            <div className="w-[31px] border-r border-[#c8c8c8] shrink-0"><svg viewBox="0 0 31 8" className="w-[31px] h-[8px]" fill="none"><path d="M10 0a5 3 0 0 0 10 0" stroke="#666" /></svg></div>
            <div className="w-[32px] border-r border-[#c8c8c8] shrink-0"><svg viewBox="0 0 31 8" className="w-[31px] h-[8px]" fill="none"><path d="M12 0v3h7V0" stroke="#666" /></svg></div>
            <div className="pl-[30px] -mt-[12px] text-[14px] leading-[16px] whitespace-nowrap text-[#999] font-['Liberation_Sans']">
              http://sf.<span className="text-[#222]">fwxgx.com</span>/question_15151
            </div>
          </div>
          <div className="ml-[1px] h-[8px] w-[24px] bg-white border-b border-x border-[#c8c8c8] shrink-0" />
          <div className="ml-[1px] h-[8px] flex-1 bg-white border-b border-l border-[#c8c8c8] pl-[8px] overflow-hidden">
            <div className="-mt-[11px] text-[13px] leading-[16px] whitespace-nowrap text-[#999]">知乎搜索</div>
          </div>
        </div>
        <div className="h-[37px] bg-[#f4f4f4] flex items-center shrink-0 text-[12px] text-[#444] whitespace-nowrap overflow-hidden">
          <svg viewBox="0 0 16 16" className="w-[15px] h-[15px] ml-[12px] shrink-0"><circle cx="8" cy="8" r="7.500" fill="#6cb820" /><circle cx="8" cy="8" r="5" fill="#f4c820" /><path d="M8 4v8M4 8h8" stroke="#1a5010" strokeWidth="2" /></svg>
          <span className="ml-[3px]">网址大全</span>
          <svg viewBox="0 0 12 14" className="w-[11px] h-[14px] ml-[10px] shrink-0" fill="none"><path d="M1 .5h7l3 3v10H1z" stroke="#999" /></svg>
          <span className="ml-[4px]">交通违法</span>
          <svg viewBox="0 0 16 16" className="w-[16px] h-[16px] ml-[15px] shrink-0" fill="none"><path d="M1 8l7-7 7 7M3 7v2M13 7v2" stroke="#4a9a30" strokeWidth="1.500" /><text x="0" y="15" fontSize="6.500" fill="#c82020" fontFamily="Liberation Sans">2345</text></svg>
          <span className="ml-[2px] w-[53px] shrink-0">软件-2345</span>
          <svg viewBox="0 0 16 16" className="w-[16px] h-[16px] ml-[10px] shrink-0"><path d="M3 10a5 5 0 0 1 10 0z" fill="#f4a030" /><path d="M1 15c0-3 2-5 4-5h6c2 0 4 2 4 5z" fill="#e8e8e8" stroke="#ccc" /></svg>
          <span className="ml-[2px]">佛山天气</span>
          <svg viewBox="0 0 16 16" className="w-[14px] h-[14px] ml-[16px] shrink-0" fill="#3a60e0"><circle cx="3" cy="7" r="2" /><circle cx="6" cy="3" r="2" /><circle cx="10" cy="3" r="2" /><circle cx="13" cy="7" r="2" /><path d="M4 13c0-3 2-5 4-5s4 2 4 5c0 2-2 2-4 2s-4 0-4-2z" /></svg>
          <span className="ml-[3px]">百度文库</span>
          <svg viewBox="0 0 12 10" className="w-[11px] h-[10px] ml-[6px] shrink-0" fill="none"><path d="M1 1l4 4-4 4M6 1l4 4-4 4" stroke="#888" strokeWidth="1.200" /></svg>
          <div className="ml-[63px] h-[14px] border-l-[3px] border-dotted border-[#ccc] shrink-0" />
          <svg viewBox="0 0 16 16" className="w-[15px] h-[15px] ml-[7px] shrink-0"><rect x="1" y="1" width="6" height="6" fill="#4a9ae0" /><path d="M11 0l1 2 2 0-1 2 1 2-3-1-2 1 0-2-1-2h2z" fill="#f4c020" /><rect x="1" y="9" width="6" height="6" fill="#40b860" /><rect x="9" y="9" width="6" height="6" fill="#e86040" /></svg>
          <div className="ml-[8px] w-0 h-0 border-x-[4px] border-t-[4px] border-x-transparent border-t-[#888] shrink-0" />
          <svg viewBox="0 0 14 14" className="w-[14px] h-[14px] ml-[9px] shrink-0" fill="none"><path d="M1 2c2-1 4-1 6 0 2-1 4-1 6 0v10c-2-1-4-1-6 0-2-1-4-1-6 0zM7 2v10" stroke="#30b040" strokeWidth="1.500" /></svg>
          <svg viewBox="0 0 14 14" className="w-[14px] h-[14px] ml-[6px] shrink-0" fill="none"><rect x="1" y="2" width="14" height="11" rx="1" stroke="#e85030" strokeWidth="1.500" /><path d="M1 6h14" stroke="#e85030" /></svg>
        </div>
        <div className="h-[29px] flex items-end shrink-0 bg-[#f4f4f4] border-b border-[#b0b0b0] text-[12px] whitespace-nowrap">
          <div className="w-[174px] h-[28px] shrink-0 flex items-center bg-[#f0f0f0] border-r border-t border-[#b8b8b8] rounded-tr-[3px]">
            <div className="w-[3px] h-[12px] bg-[#f4c020] shrink-0" />
            <div className="relative w-[142px] ml-[4px] overflow-hidden text-[#555] shrink-0">360导航_新一代安全上网导航<Fade to="to-[#f0f0f0]" /></div>
            <div className="ml-[9px]"><TabX /></div>
          </div>
          <div className="w-[193px] h-[28px] ml-[1px] shrink-0 flex items-center bg-[#f0f0f0] border border-b-0 border-[#b8b8b8] rounded-t-[3px] pl-[5px]">
            <TabIcon />
            <div className="relative w-[141px] ml-[4px] overflow-hidden text-[#555] shrink-0">答疑解惑_广联达服务新干线<Fade to="to-[#f0f0f0]" /></div>
            <div className="ml-[9px]"><TabX /></div>
          </div>
          <div className="flex-1 h-[29px] -mb-px ml-[1px] flex items-center bg-white border-l border-t border-[#b8b8b8] rounded-t-[3px] pl-[4px] overflow-hidden">
            <TabIcon />
            <div className="relative w-[145px] ml-[3px] overflow-hidden text-[#333] shrink-0">承台钢筋根数计算问题_广联达<Fade to="to-white" /></div>
            <div className="ml-[7px]"><TabX /></div>
          </div>
        </div>
        <div className="h-[48px] shrink-0" />
        <div className="h-[64px] shrink-0 flex items-center bg-[#f9f9f9] border-y border-[#e6e6e6]">
          <div className="w-[22px] h-[30px] bg-[#fdb900] rounded-r-[3px] flex items-center justify-end pr-[4px] text-white text-[26px] leading-[30px] font-['Liberation_Sans'] overflow-hidden shrink-0">?</div>
          <div className="ml-[15px] text-[18px] leading-[26px] text-[#555]">承台钢筋根数计算问题</div>
        </div>
        <div className="mt-[21px] ml-[21px] text-[14.500px] leading-[20px] text-[#3d78b4] whitespace-nowrap shrink-0">浏览5 次 | 0 回答 | 0 答得好 | 0问得好</div>
        <div className="mt-[17px] ml-[21px] text-[16px] leading-[22px] text-[#444] whitespace-pre shrink-0">属性设置的是16根  为什么计算出来只有15根 求解</div>
        <div className="mt-[3px] ml-[21px] shrink-0"><Thumb /></div>
        <div className="mt-[38px] pl-[215px] flex shrink-0">
          {[
            { l: "问得好", bg: "bg-[#ffd5dc]", c: "text-[#d9566f]", i: <ThumbsUp className="w-[19px] h-[19px]" strokeWidth={1.3} /> },
            { l: "我收藏", bg: "bg-[#ffeccb]", c: "text-[#cda255]", i: <Star className="w-[19px] h-[19px]" strokeWidth={1.3} /> },
            { l: "我分享", bg: "bg-[#d2edff]", c: "text-[#4d9bd5]", i: (
              <svg viewBox="0 0 18 18" className="w-[18px] h-[18px]" fill="none" stroke="currentColor" strokeWidth="1.200"><path d="M9 2H2v14h14V9" /><path d="M6 11c0-4 3-6 8-6M11 2l4 3-3 4" /></svg>
            ) },
          ].map((b) => (
            <div key={b.l} className={`w-[110px] flex flex-col items-center shrink-0 ${b.c}`}>
              <div className={`w-[67px] h-[67px] rounded-full flex flex-col items-center pt-[9px] ${b.bg}`}>
                {b.i}
                <span className="text-[18px] leading-[24px] font-['Liberation_Sans'] mt-[2px]">0</span>
              </div>
              <div className="mt-[12px] text-[18px] leading-[24px] font-light">{b.l}</div>
            </div>
          ))}
        </div>
        <div className="h-px bg-[#d8d8d8] mt-[2px] ml-[2px] shrink-0" />
        <div className="mt-[15px] h-[16px] bg-[#f0f0f0] shrink-0 flex items-end"><div className="w-[347px] h-[13px] bg-[#bdbdbd]" /></div>
        <div className="mt-[2px] h-px bg-[#d8d8d8] shrink-0" />
      </div>
    </div>
  );
}
